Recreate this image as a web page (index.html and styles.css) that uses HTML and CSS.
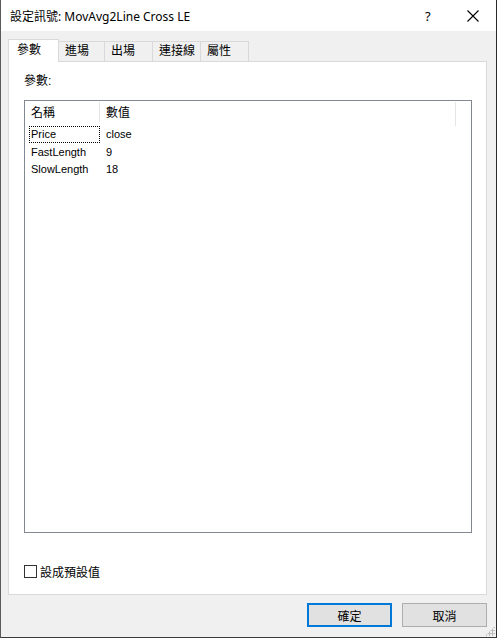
FILE: index.html
```html
<!DOCTYPE html>
<html lang="zh-Hant">
<head>
    <meta charset="UTF-8">
    <meta name="viewport" content="width=device-width, initial-scale=1.0">
    <title>設定訊號</title>
    <link rel="stylesheet" href="styles.css">
</head>
<body>
<div class="window">
    <div class="titlebar">
        <span class="title">設定訊號: MovAvg2Line Cross LE</span>
        <span class="help">?</span>
        <span class="close">
            <svg width="12" height="12" viewBox="0 0 12 12"><path d="M0.5 0.5 L11.5 11.5 M11.5 0.5 L0.5 11.5" stroke="#000" stroke-width="1.1" fill="none"/></svg>
        </span>
    </div>

    <div class="body">
        <div class="tabs">
            <div class="tab selected">參數</div>
            <div class="tab">進場</div>
            <div class="tab">出場</div>
            <div class="tab">連接線</div>
            <div class="tab">屬性</div>
        </div>
        <div class="panel">
            <div class="label">參數:</div>
            <div class="listview">
                <div class="lv-header">
                    <div class="col-name">名稱</div>
                    <div class="col-value">數值</div>
                </div>
                <div class="lv-row">
                    <div class="col-name focus">Price</div>
                    <div class="col-value">close</div>
                </div>
                <div class="lv-row">
                    <div class="col-name">FastLength</div>
                    <div class="col-value">9</div>
                </div>
                <div class="lv-row">
                    <div class="col-name">SlowLength</div>
                    <div class="col-value">18</div>
                </div>
            </div>
            <label class="check">
                <span class="box"></span>
                <span>設成預設值</span>
            </label>
        </div>
        <div class="buttons">
            <button type="button" class="btn default">確定</button>
            <button type="button" class="btn">取消</button>
        </div>
        <div class="grip"></div>
    </div>
</div>
</body>
</html>
```

FILE: styles.css
```css
html, body {
    margin: 0;
    padding: 0;
    background-color: #f0f0f0;
}
body {
    font-family: 'Liberation Sans', 'Noto Sans CJK TC', sans-serif;
    font-size: 12px;
    color: #000;
}
.window {
    width: 497px;
    height: 638px;
    box-sizing: border-box;
    border-left: 1px solid #5a5a5a;
    border-right: 1px solid #2b2b2b;
    border-bottom: 1px solid #3a3a3a;
    display: flex;
    flex-direction: column;
    background-color: #f0f0f0;
}
.titlebar {
    height: 31px;
    background-color: #fff;
    display: flex;
    align-items: center;
    padding-left: 9px;
}
.title {
    flex: 1;
    font-family: 'Noto Sans', 'Noto Sans CJK TC', sans-serif;
    font-size: 12px;
}
.help {
    width: 14px;
    margin-right: 28px;
    font-family: 'Noto Sans', sans-serif;
    font-size: 13px;
}
.close {
    width: 12px;
    margin-right: 17px;
    display: flex;
}
.body {
    flex: 1;
    position: relative;
    padding: 8px 9px 0 7px;
    display: flex;
    flex-direction: column;
}
.tabs {
    display: flex;
    align-items: flex-end;
    height: 22px;
    position: relative;
    z-index: 1;
}
.tab {
    flex-shrink: 0;
    white-space: nowrap;
    height: 20px;
    box-sizing: border-box;
    border: 1px solid #d9d9d9;
    border-bottom: none;
    border-left: none;
    padding: 0 0 0 6px;
    line-height: 19px;
    width: 48px;
}
.tab:nth-child(2) {
    width: 46px;
}
.tab.selected {
    height: 23px;
    width: 51px;
    background-color: #fff;
    border-left: 1px solid #d9d9d9;
    border-right: 1px solid #d9d9d9;
    margin-bottom: -1px;
    padding-left: 8px;
    line-height: 21px;
}
.panel {
    height: 534px;
    box-sizing: border-box;
    background-color: #fff;
    border: 1px solid #d9d9d9;
    padding: 10px 15px 0 15px;
    display: flex;
    flex-direction: column;
}
.label {
    height: 18px;
    line-height: 18px;
}
.listview {
    margin-top: 10px;
    width: 448px;
    height: 433px;
    box-sizing: border-box;
    border: 1px solid #828790;
    padding: 1px 0 0 0;
    font-size: 11px;
}
.lv-header {
    display: flex;
    height: 24px;
    line-height: 22px;
    font-size: 12px;
}
.lv-header .col-name {
    border-right: 1px solid #e5e5e5;
    height: 20px;
}
.lv-header .col-value {
    width: 356px;
    height: 24px;
    box-sizing: border-box;
    border-right: 1px solid #e5e5e5;
}
.col-name {
    flex-shrink: 0;
    width: 75px;
    padding-left: 6px;
    box-sizing: border-box;
}
.col-value {
    flex-shrink: 0;
    padding-left: 6px;
}
.lv-row {
    display: flex;
    height: 17.5px;
    line-height: 16px;
}
.lv-row .col-name {
    margin-left: 4px;
    width: 71px;
    padding-left: 2px;
    height: 17px;
}
.focus {
    outline: 1px dotted #000;
    outline-offset: -1px;
}
.check {
    margin-top: 30px;
    display: flex;
    align-items: center;
    gap: 3px;
}
.box {
    width: 13px;
    height: 13px;
    box-sizing: border-box;
    border: 1px solid #333;
    background-color: #fff;
}
.buttons {
    display: flex;
    justify-content: flex-end;
    gap: 10px;
    margin-top: 8px;
}
.btn {
    width: 85px;
    height: 24px;
    box-sizing: border-box;
    font-family: inherit;
    font-size: 12px;
    background-color: #e1e1e1;
    border: 1px solid #adadad;
    padding: 0;
    color: #000;
}
.btn.default {
    border: 2px solid #0078d7;
}
.grip {
    position: absolute;
    right: 1px;
    bottom: 1px;
    width: 10px;
    height: 10px;
    background-image: radial-gradient(circle, #bcbcbc 1.1px, transparent 1.2px);
    background-size: 3px 3px;
    clip-path: polygon(100% 0, 100% 100%, 0 100%);
}
```
